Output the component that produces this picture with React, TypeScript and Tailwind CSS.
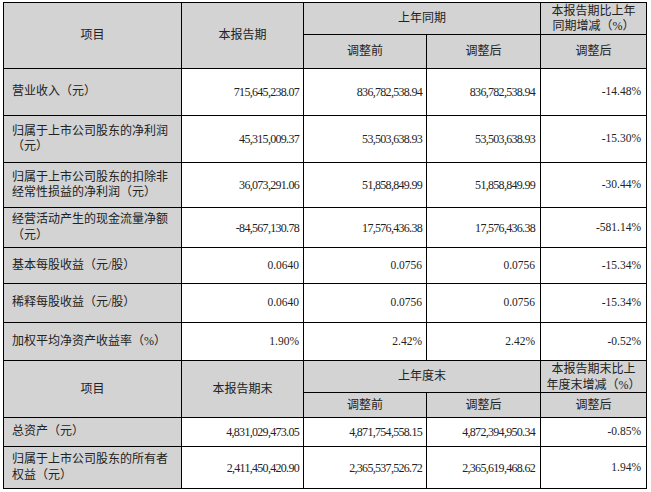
import React from "react";

const FONT = { fontFamily: '"Liberation Serif", "Noto Sans CJK SC", serif' };

const G = "bg-[#d3d3d3]";
const W = "bg-white";

function H({ children, className = "" }: { children: React.ReactNode; className?: string }) {
  return (
    <div className={`${G} flex items-center justify-center text-center text-[12px] leading-[15px] ${className}`}>
      {children}
    </div>
  );
}

function L({ children }: { children: React.ReactNode }) {
  return (
    <div className={`${G} flex items-center pl-[8px] pr-[4px] text-[12px] leading-[15.5px]`}>
      <span>{children}</span>
    </div>
  );
}

function N({ v, pr = "pr-[5px]" }: { v: string; pr?: string }) {
  const big = v.includes(",");
  return (
    <div
      className={`${W} flex items-center justify-end ${pr} ${big ? "text-[12px] tracking-[-0.7px]" : "text-[11.5px]"} leading-none`}
    >
      {v}
    </div>
  );
}

const rows1: [React.ReactNode, string, string, string, string][] = [
  ["营业收入（元）", "715,645,238.07", "836,782,538.94", "836,782,538.94", "-14.48%"],
  [
    <>
      归属于上市公司股东的净利润
      <br />
      （元）
    </>,
    "45,315,009.37",
    "53,503,638.93",
    "53,503,638.93",
    "-15.30%",
  ],
  [
    <>
      归属于上市公司股东的扣除非
      <br />
      经常性损益的净利润（元）
    </>,
    "36,073,291.06",
    "51,858,849.99",
    "51,858,849.99",
    "-30.44%",
  ],
  [
    <>
      经营活动产生的现金流量净额
      <br />
      （元）
    </>,
    "-84,567,130.78",
    "17,576,436.38",
    "17,576,436.38",
    "-581.14%",
  ],
  ["基本每股收益（元/股）", "0.0640", "0.0756", "0.0756", "-15.34%"],
  ["稀释每股收益（元/股）", "0.0640", "0.0756", "0.0756", "-15.34%"],
  ["加权平均净资产收益率（%）", "1.90%", "2.42%", "2.42%", "-0.52%"],
];

const rows2: [React.ReactNode, string, string, string, string][] = [
  ["总资产（元）", "4,831,029,473.05", "4,871,754,558.15", "4,872,394,950.34", "-0.85%"],
  [
    <>
      归属于上市公司股东的所有者
      <br />
      权益（元）
    </>,
    "2,411,450,420.90",
    "2,365,537,526.72",
    "2,365,619,468.62",
    "1.94%",
  ],
];

function Row({ r }: { r: [React.ReactNode, string, string, string, string] }) {
  return (
    <>
      <L>{r[0]}</L>
      <N v={r[1]} pr="pr-[4px]" />
      <N v={r[2]} pr="pr-[4px]" />
      <N v={r[3]} pr="pr-[5px]" />
      <N v={r[4]} />
    </>
  );
}

export default function App() {
  return (
    <div className="w-[651px] h-[492px] bg-white pl-[3px] pt-[2px] text-[#222]" style={FONT}>
      <div className="grid w-[644px] grid-cols-[177px_121px_122px_113px_105px] grid-rows-[31px_33px_46px_46px_44px_39px_35px_38px_37px] gap-px bg-black p-px">
        <H className="row-span-2">项目</H>
        <H className="row-span-2">本报告期</H>
        <H className="col-span-2">上年同期</H>
        <H>
          本报告期比上年
          <br />
          同期增减（%）
        </H>
        <H>调整前</H>
        <H>调整后</H>
        <H>调整后</H>
        {rows1.map((r, i) => (
          <Row key={i} r={r} />
        ))}
      </div>
      <div className="grid w-[644px] grid-cols-[177px_121px_122px_113px_105px] grid-rows-[31px_24px_28px_41px] gap-px bg-black px-px pb-px">
        <H className="row-span-2">项目</H>
        <H className="row-span-2">本报告期末</H>
        <H className="col-span-2">上年度末</H>
        <H className="leading-[16px]">
          本报告期末比上
          <br />
          年度末增减（%）
        </H>
        <H>调整前</H>
        <H>调整后</H>
        <H>调整后</H>
        {rows2.map((r, i) => (
          <Row key={i} r={r} />
        ))}
      </div>
    </div>
  );
}
